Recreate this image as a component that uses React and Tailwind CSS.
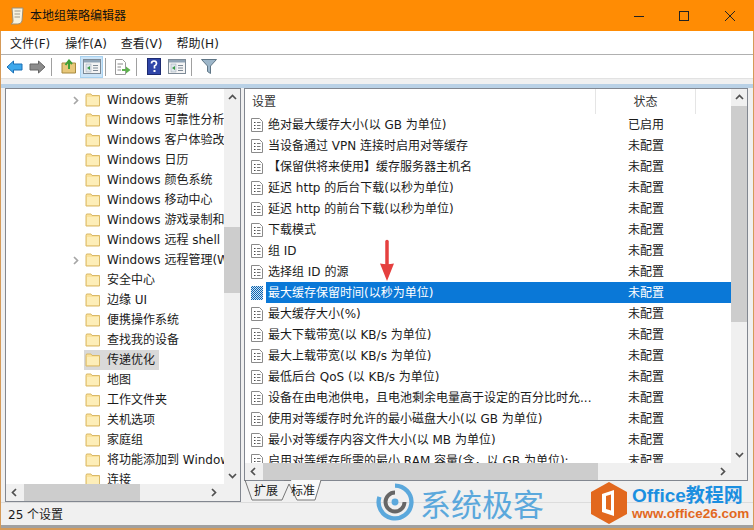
import React from "react";

const font = { fontFamily: '"DejaVu Sans", "Noto Sans CJK SC", sans-serif' };

const tree = [
  ["Windows 更新", 1], ["Windows 可靠性分析", 0], ["Windows 客户体验改进计划", 0], ["Windows 日历", 0], ["Windows 颜色系统", 0],
  ["Windows 移动中心", 0], ["Windows 游戏录制和广播", 0], ["Windows 远程 shell", 0], ["Windows 远程管理(WinRM)", 1],
  ["安全中心", 0], ["边缘 UI", 0], ["便携操作系统", 0], ["查找我的设备", 0], ["传递优化", 0, true], ["地图", 0],
  ["工作文件夹", 0], ["关机选项", 0], ["家庭组", 0], ["将功能添加到 Windows 10", 0], ["连接", 0],
];

const rows = [
  ["绝对最大缓存大小(以 GB 为单位)", "已启用"],
  ["当设备通过 VPN 连接时启用对等缓存", "未配置"],
  ["【保留供将来使用】缓存服务器主机名", "未配置"],
  ["延迟 http 的后台下载(以秒为单位)", "未配置"],
  ["延迟 http 的前台下载(以秒为单位)", "未配置"],
  ["下载模式", "未配置"],
  ["组 ID", "未配置"],
  ["选择组 ID 的源", "未配置"],
  ["最大缓存保留时间(以秒为单位)", "未配置", true],
  ["最大缓存大小(%)", "未配置"],
  ["最大下载带宽(以 KB/s 为单位)", "未配置"],
  ["最大上载带宽(以 KB/s 为单位)", "未配置"],
  ["最低后台 QoS (以 KB/s 为单位)", "未配置"],
  ["设备在由电池供电，且电池剩余电量高于设定的百分比时允...", "未配置"],
  ["使用对等缓存时允许的最小磁盘大小(以 GB 为单位)", "未配置"],
  ["最小对等缓存内容文件大小(以 MB 为单位)", "未配置"],
  ["启用对等缓存所需的最小 RAM 容量(含，以 GB 为单位):", "未配置"],
];

function Folder() {
  return (
    <svg width="16" height="14" viewBox="0 0 16 14" className="shrink-0">
      <path d="M1 2.5 L1.5 1 H6 L7 2.5 H14.5 V13 H1 Z" fill="#fbe29b" stroke="#d9b968" strokeWidth="1" />
      <path d="M2 4 H14 V12 H2 Z" fill="#fdeeb9" />
    </svg>
  );
}

function Doc({ selected }) {
  if (selected)
    return (
      <svg width="12" height="14" viewBox="0 0 12 14" className="shrink-0">
        <defs>
          <pattern id="dither" width="2" height="2" patternUnits="userSpaceOnUse">
            <rect width="2" height="2" fill="#0a64b0" />
            <rect width="1" height="1" fill="#cfe3f5" />
            <rect x="1" y="1" width="1" height="1" fill="#cfe3f5" />
          </pattern>
        </defs>
        <rect width="12" height="14" fill="url(#dither)" />
      </svg>
    );
  return (
    <svg width="12" height="14" viewBox="0 0 12 14" className="shrink-0">
      <path d="M0.5 0.5 H8.5 L11.5 3.5 V13.5 H0.5 Z" fill="#fff" stroke="#8a8a8a" />
      <path d="M3 4.5 H4.5 M3 7.5 H4.5 M3 10.5 H4.5" stroke="#444" />
      <path d="M6 4.5 H9.5 M6 7.5 H9.5 M6 10.5 H9.5" stroke="#777" />
    </svg>
  );
}

function Chevron({ dir, color = "#505050" }) {
  const d = {
    up: "M2 7 L5.5 3.5 L9 7",
    down: "M2 4 L5.5 7.5 L9 4",
    left: "M7 2 L3.5 5.5 L7 9",
    right: "M4 2 L7.5 5.5 L4 9",
  }[dir];
  return (
    <svg width="11" height="11" viewBox="0 0 11 11">
      <path d={d} fill="none" stroke={color} strokeWidth="1.7" />
    </svg>
  );
}

function Sep({ className }) {
  return <div className={`w-px h-[18px] bg-[#a0a0a0] mr-[5px] shrink-0 ${className}`} />;
}

function ToolBtn({ children, active }) {
  return (
    <div className={`w-[23px] h-[22px] shrink-0 flex items-center justify-center ${active ? "bg-[#cce4f7] border border-[#a8d2f0]" : ""}`}>
      {children}
    </div>
  );
}

function PaneIcon({ color }) {
  return (
    <svg width="18" height="15" viewBox="0 0 18 15">
      <rect x="0.5" y="0.5" width="17" height="14" fill="#f4f4f4" stroke="#7d8a96" />
      <rect x="1" y="1" width="16" height="2.5" fill="#8fa3b5" />
      <rect x="3" y="5" width="5" height="8" fill="#dfe6ec" stroke="#9aa7b2" strokeWidth="0.5" />
      <path d="M10 6.5 H15 M10 9 H15 M10 11.5 H15" stroke="#7d8a96" />
      <path d="M7 7 L4 9 L7 11 Z" fill={color} />
    </svg>
  );
}

export default function App() {
  return (
    <div style={font} className="relative w-[754px] h-[530px] overflow-hidden bg-[#d59a58] pl-[1px] pr-[1px] pb-[2px] flex flex-col text-[12px] leading-none text-[#1a1a1a]">
      {/* Title */}
      <div className="h-[31px] -ml-[1px] -mr-[1px] bg-[#ff8c04] flex items-center shrink-0">
        <svg width="16" height="18" viewBox="0 0 16 18" className="ml-[9px]">
          <path d="M3 1 H14 L13 14 Q12 17 9 17 H2 Q4 16 4 14 Z" fill="#f7f1df" stroke="#9a8f78" />
          <path d="M5.5 4 H11.5 M5.5 7 H11 M5.5 10 H11" stroke="#a09a8a" />
        </svg>
        <span className="ml-[5px] text-[12px] text-[#111]">本地组策略编辑器</span>
        <div className="flex-1" />
        <svg width="12" height="12" viewBox="0 0 12 12" className="mr-[33px]">
          <path d="M1 6.5 H11" stroke="#222" />
        </svg>
        <svg width="12" height="12" viewBox="0 0 12 12" className="mr-[34px]">
          <rect x="1.5" y="1.5" width="9" height="9" fill="none" stroke="#222" />
        </svg>
        <svg width="12" height="12" viewBox="0 0 12 12" className="mr-[18px]">
          <path d="M1 1 L11 11 M11 1 L1 11" stroke="#222" />
        </svg>
      </div>
      {/* Menu */}
      <div className="h-[24px] bg-white border-b border-[#b0b0b0] flex items-center shrink-0 pt-[2px]">
        <span className="ml-[9px]">文件(F)</span>
        <span className="ml-[15px]">操作(A)</span>
        <span className="ml-[14px]">查看(V)</span>
        <span className="ml-[14px]">帮助(H)</span>
      </div>
      {/* Toolbar */}
      <div className="h-[23px] bg-white flex items-center pl-[5px] shrink-0">
        <svg width="17" height="14" viewBox="0 0 17 14" className="shrink-0">
          <path d="M1 7 L7.5 1 V4 H16 V10 H7.5 V13 Z" fill="#3fa9ec" stroke="#1a6fb5" />
        </svg>
        <svg width="17" height="14" viewBox="0 0 17 14" className="ml-[6px] shrink-0">
          <path d="M16 7 L9.5 1 V4 H1 V10 H9.5 V13 Z" fill="#8c8c8c" stroke="#666" />
        </svg>
        <Sep className="ml-[5px]" />
        <ToolBtn>
          <svg width="16" height="15" viewBox="0 0 16 15">
            <path d="M1 4 H14.5 V14 H1 Z" fill="#e8c87a" stroke="#a88a3e" />
            <path d="M8 10 V3 M4.5 6 L8 1.5 L11 5" fill="none" stroke="#3fa037" strokeWidth="2" />
          </svg>
        </ToolBtn>
        <ToolBtn active>
          <PaneIcon color="#3a9a45" />
        </ToolBtn>
        <Sep className="ml-[2px]" />
        <ToolBtn>
          <svg width="17" height="16" viewBox="0 0 17 16">
            <path d="M1.5 0.5 H8.5 L11.5 3.5 V15.5 H1.5 Z" fill="#fff" stroke="#9a9a9a" />
            <path d="M3.5 5 H9 M3.5 8 H7 M3.5 11 H7" stroke="#888" />
            <path d="M8 10 H12 V7.5 L16.5 11 L12 14.5 V12 H8 Z" fill="#5eb14e" />
          </svg>
        </ToolBtn>
        <Sep className="ml-[2px]" />
        <ToolBtn>
          <svg width="14" height="17" viewBox="0 0 14 17">
            <rect x="0.5" y="0.5" width="13" height="16" fill="#2f45a8" stroke="#1c2a70" />
            <path d="M4.5 5.5 Q4.5 3 7 3 Q9.5 3 9.5 5.5 Q9.5 7 7.5 8 V10.5" fill="none" stroke="#fff" strokeWidth="1.7" />
            <rect x="6.5" y="12" width="2" height="2" fill="#fff" />
          </svg>
        </ToolBtn>
        <ToolBtn>
          <PaneIcon color="#3a9a45" />
        </ToolBtn>
        <Sep className="ml-[3px]" />
        <ToolBtn>
          <svg width="16" height="15" viewBox="0 0 16 15">
            <path d="M0.5 0.5 H15.5 L9.5 7 V14.5 L6.5 12.5 V7 Z" fill="#9db6c9" stroke="#5f7585" />
          </svg>
        </ToolBtn>
      </div>
      <div className="h-[1px] bg-[#e2e2e2] shrink-0" />
      <div className="h-[5px] bg-[#f0f0f0] shrink-0" />
      <div className="h-[4px] bg-[#b9d1e6] shrink-0" />
      {/* Body */}
      <div className="flex-1 min-h-0 flex bg-[#f0f0f0] pl-[4px] pr-[5px] gap-[3px]">
        {/* Left pane */}
        <div className="w-[236px] h-[414px] border border-[#828790] bg-white flex flex-col shrink-0">
          <div className="flex-1 min-h-0 flex">
            <div className="flex-1 min-w-0 overflow-hidden pt-px">
              {tree.map(([t, arrow, sel], i) => (
                <div key={i} className="h-[20px] flex items-center">
                  <div className="w-[78px] flex justify-end pr-[3px] shrink-0">
                    {arrow ? <Chevron dir="right" color="#a6a6a6" /> : null}
                  </div>
                  <div className={`flex items-center h-[20px] pl-[1px] pr-[4px] shrink-0 ${sel ? "bg-[#d9d9d9]" : ""}`}>
                    <Folder />
                    <span className="ml-[6px] whitespace-nowrap">{t}</span>
                  </div>
                </div>
              ))}
            </div>
            <div className="w-[16px] bg-[#f0f0f0] flex flex-col shrink-0">
              <div className="h-[17px] flex items-center justify-center"><Chevron dir="up" /></div>
              <div className="h-[121px] shrink-0" />
              <div className="h-[66px] bg-[#cdcdcd] shrink-0" />
              <div className="flex-1" />
              <div className="h-[17px] flex items-center justify-center"><Chevron dir="down" /></div>
            </div>
          </div>
          <div className="h-[17px] bg-[#f0f0f0] flex items-center shrink-0">
            <div className="w-[17px] flex justify-center shrink-0"><Chevron dir="left" /></div>
            <div className="w-[116px] h-full bg-[#cdcdcd] ml-[1px] shrink-0" />
            <div className="flex-1" />
            <div className="w-[17px] flex justify-center mr-[18px] shrink-0"><Chevron dir="right" /></div>
          </div>
        </div>
        {/* Right pane */}
        <div className="flex-1 min-w-0 flex flex-col">
          <div className="h-[393px] border border-[#828790] bg-white flex flex-col shrink-0">
            <div className="flex-1 min-h-0 flex">
              <div className="flex-1 min-w-0 overflow-hidden flex flex-col">
                <div className="h-[25px] flex shrink-0 text-[#333]">
                  <div className="w-[351px] border-r border-[#e5e5e5] pl-[7px] flex items-center">设置</div>
                  <div className="w-[100px] border-r border-[#e5e5e5] flex items-center justify-center">状态</div>
                </div>
                {rows.map(([t, s, sel], i) => (
                  <div key={i} className="h-[21px] flex items-center shrink-0 pl-[6px]">
                    <Doc selected={sel} />
                    <div className={`ml-[3px] h-[21px] flex-1 flex items-center ${sel ? "bg-[#0a78d7] text-white" : ""}`}>
                      <span className="ml-[2px] w-[360px] whitespace-nowrap shrink-0">{t}</span>
                      <span>{s}</span>
                    </div>
                  </div>
                ))}
              </div>
              <div className="w-[16px] bg-[#f0f0f0] flex flex-col shrink-0">
                <div className="h-[17px] flex items-center justify-center"><Chevron dir="up" /></div>
                <div className="h-[216px] bg-[#cdcdcd] shrink-0" />
                <div className="flex-1" />
                <div className="h-[17px] flex items-center justify-center"><Chevron dir="down" /></div>
              </div>
            </div>
            <div className="h-[17px] bg-[#f0f0f0] flex items-center shrink-0">
              <div className="w-[17px] flex justify-center shrink-0"><Chevron dir="left" /></div>
              <div className="w-[335px] h-full bg-[#cdcdcd] ml-[1px] shrink-0" />
              <div className="flex-1" />
              <div className="w-[17px] flex justify-center mr-[16px] shrink-0"><Chevron dir="right" /></div>
            </div>
          </div>
          {/* Tabs */}
          <div className="relative h-[20px] flex items-center shrink-0 -mt-px pt-[2px]">
            <svg width="80" height="21" viewBox="0 0 80 21" className="absolute left-0 top-0">
              <path d="M47 0 L53 20 H71 L77 0 Z" fill="#fafafa" />
              <path d="M1 0 L8 20 H38 L45 4 M40 0 L47 0 M45 4 L53 20 H71 L77 0" fill="none" stroke="#777" />
            </svg>
            <span className="relative ml-[10px]">扩展</span>
            <span className="relative ml-[13px]">标准</span>
          </div>
        </div>
      </div>
      {/* Status */}
      <div className="h-[23px] bg-[#f0f0f0] border-t border-[#dcdcdc] flex items-center pl-[7px] shrink-0 pt-[1px]">
        25 个设置
      </div>
      <div className="h-[3px] bg-[#a0a0a0] shrink-0" />
      {/* Watermark */}
      <div className="absolute left-[376px] top-[483px] flex items-center">
        <svg width="38" height="38" viewBox="0 0 44 44">
          <path d="M22 3 A19 19 0 1 1 4 16" fill="none" stroke="#5ba8dc" strokeWidth="5" />
          <path d="M22 11 A11 11 0 1 0 33 22" fill="none" stroke="#666" strokeWidth="4.5" />
          <circle cx="22" cy="22" r="4" fill="#5ba8dc" />
        </svg>
        <span className="text-[31px] leading-none text-[#5ba8dc] ml-[6px] whitespace-nowrap" style={{ fontFamily: '"Noto Sans CJK SC", sans-serif' }}>系统极客</span>
      </div>
      <div className="absolute left-[590px] top-[481px] flex items-center">
        <svg width="38" height="44" viewBox="0 0 38 44">
          <path d="M19 1 L37 11 V33 L19 43 L1 33 V11 Z" fill="#e2681e" />
          <path d="M12 13 L24 9 V35 L12 31 Z M16 15 V28 L21 29.5 V13.5 Z" fill="#fff" fillRule="evenodd" />
        </svg>
        <div className="ml-[4px] flex flex-col">
          <span className="text-[#1b8fe0] font-bold text-[19px] leading-[20px] whitespace-nowrap" style={{ fontFamily: '"Liberation Sans", "Noto Sans CJK SC", sans-serif' }}>Office教程网</span>
          <span className="text-[#e2681e] font-bold text-[13.5px] leading-[15px] whitespace-nowrap" style={{ fontFamily: '"Liberation Sans", sans-serif' }}>www.office26.com</span>
        </div>
      </div>
      {/* Red arrow */}
      <svg width="16" height="44" viewBox="0 0 16 44" className="absolute left-[379px] top-[239px]">
        <path d="M8 2.5 V26" stroke="#e5403f" strokeWidth="3.5" strokeLinecap="round" />
        <path d="M1 24.5 Q8 26 15 24.5 L8 42 Z" fill="#e5403f" />
      </svg>
    </div>
  );
}
